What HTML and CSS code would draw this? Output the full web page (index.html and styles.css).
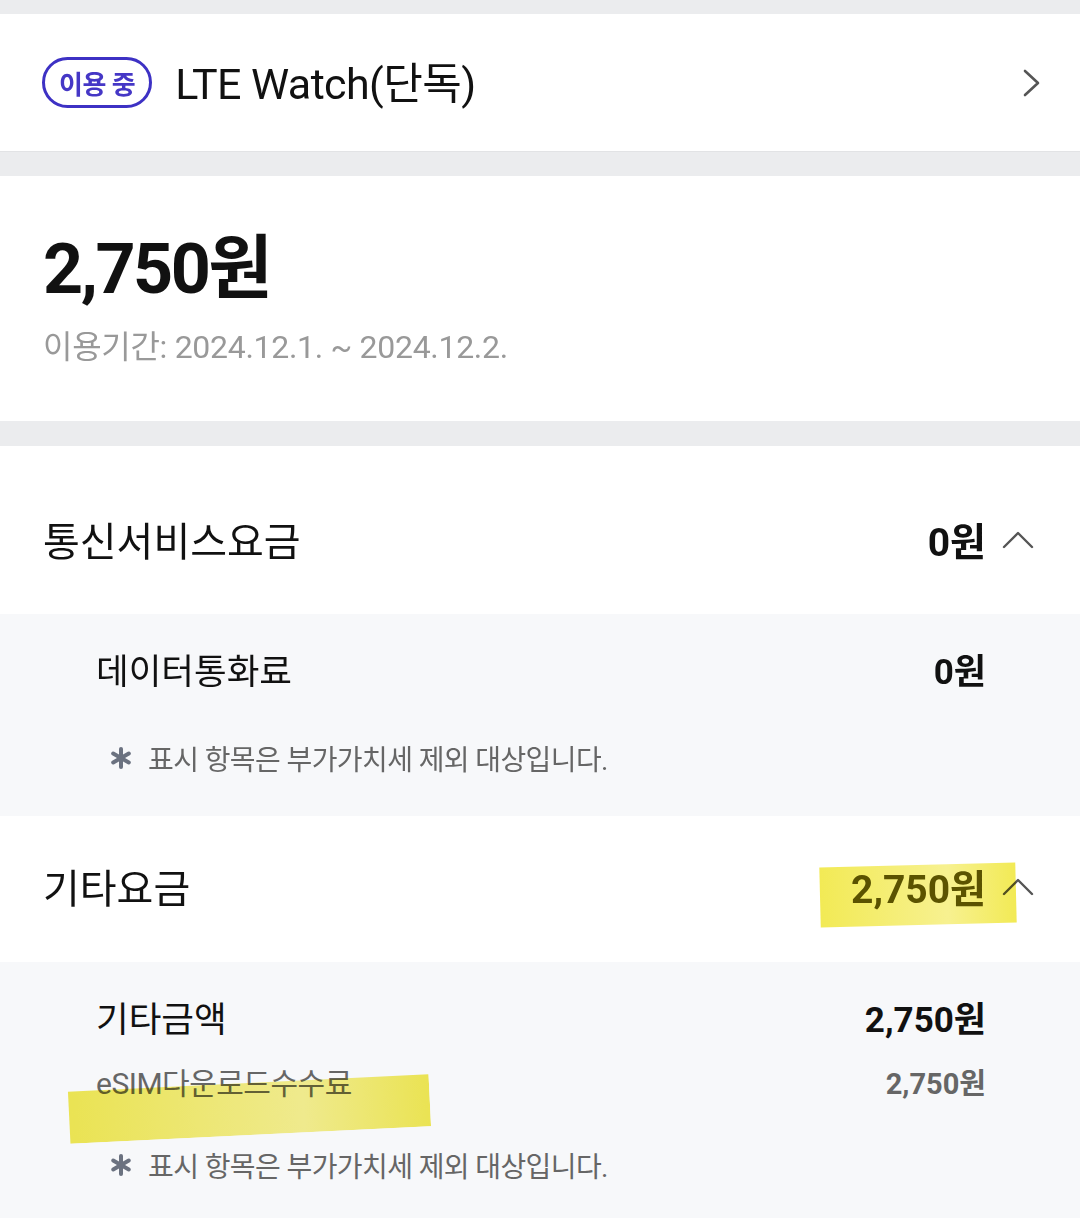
FILE: index.html
```html
<!DOCTYPE html>
<html lang="ko">
<head>
    <meta charset="UTF-8">
    <meta name="viewport" content="width=device-width, initial-scale=1.0">
    <title>요금 상세</title>
    <link rel="stylesheet" href="styles.css">
</head>
<body>
    <div class="page">
        <div class="gap gap-top"></div>

        <section class="plan">
            <span class="badge">이용 중</span>
            <span class="plan-name">LTE Watch(단독)</span>
            <svg class="chevron-right" width="20" height="30" viewBox="0 0 20 30">
                <polyline points="3,3 16,15 3,27" fill="none" stroke="#555" stroke-width="2.6" stroke-linecap="round" stroke-linejoin="round"/>
            </svg>
        </section>

        <div class="gap"></div>

        <section class="summary">
            <div class="total">2,750원</div>
            <div class="period">이용기간: 2024.12.1. ~ 2024.12.2.</div>
        </section>

        <div class="gap gap-wide"></div>

        <section class="fee-head first">
            <span class="fee-title">통신서비스요금</span>
            <span class="fee-amount">0원</span>
            <svg class="chevron-up" width="32" height="22" viewBox="0 0 32 22">
                <polyline points="2,20 16,6 30,20" fill="none" stroke="#555" stroke-width="2.4" stroke-linecap="round" stroke-linejoin="round"/>
            </svg>
        </section>
        <div class="fee-body">
            <div class="item-row">
                <span class="item-label">데이터통화료</span>
                <span class="item-amount">0원</span>
            </div>
            <div class="note">
                <svg class="star" width="22" height="22" viewBox="0 0 22 22">
                    <g stroke="#6b7280" stroke-width="4" stroke-linecap="round">
                        <line x1="11" y1="2" x2="11" y2="20"/>
                        <line x1="3.2" y1="6.5" x2="18.8" y2="15.5"/>
                        <line x1="3.2" y1="15.5" x2="18.8" y2="6.5"/>
                    </g>
                </svg>
                <span>표시 항목은 부가가치세 제외 대상입니다.</span>
            </div>
        </div>

        <section class="fee-head">
            <span class="fee-title">기타요금</span>
            <span class="fee-amount hl">2,750원</span>
            <svg class="chevron-up" width="32" height="22" viewBox="0 0 32 22">
                <polyline points="2,20 16,6 30,20" fill="none" stroke="#555" stroke-width="2.4" stroke-linecap="round" stroke-linejoin="round"/>
            </svg>
            <div class="marker marker-amount"></div>
        </section>
        <div class="fee-body last">
            <div class="item-row">
                <span class="item-label">기타금액</span>
                <span class="item-amount">2,750원</span>
            </div>
            <div class="sub-row">
                <span class="sub-label">eSIM다운로드수수료</span>
                <span class="sub-amount">2,750원</span>
            </div>
            <div class="note">
                <svg class="star" width="22" height="22" viewBox="0 0 22 22">
                    <g stroke="#6b7280" stroke-width="4" stroke-linecap="round">
                        <line x1="11" y1="2" x2="11" y2="20"/>
                        <line x1="3.2" y1="6.5" x2="18.8" y2="15.5"/>
                        <line x1="3.2" y1="15.5" x2="18.8" y2="6.5"/>
                    </g>
                </svg>
                <span>표시 항목은 부가가치세 제외 대상입니다.</span>
            </div>
            <div class="marker marker-esim"></div>
        </div>
    </div>
</body>
</html>
```

FILE: styles.css
```css
body, html {
    margin: 0;
    padding: 0;
    font-family: Roboto, "Noto Sans CJK KR", sans-serif;
    background-color: #f7f8fa;
    color: #111;
}

.page {
    width: 1080px;
    min-height: 1218px;
    overflow: hidden;
}

.gap {
    height: 24px;
    background-color: #ebecee;
}

.gap-top {
    height: 14px;
}

.gap-wide {
    height: 25px;
}

/* plan row */
.plan {
    height: 138px;
    background-color: #fff;
    border-bottom: 1px solid #e2e3e5;
    display: flex;
    align-items: center;
    padding: 0 38px 0 42px;
    box-sizing: border-box;
}

.badge {
    height: 51px;
    box-sizing: border-box;
    border: 3px solid #3d31c4;
    border-radius: 26px;
    padding: 0 14px;
    display: flex;
    align-items: center;
    font-size: 26px;
    font-weight: 700;
    color: #4537c6;
    margin-right: 23px;
    letter-spacing: -0.5px;
}

.plan-name {
    font-size: 43px;
    flex: 1;
    letter-spacing: -0.6px;
    margin-bottom: 6px;
}

/* summary */
.summary {
    height: 245px;
    background-color: #fff;
    padding: 53px 43px 0;
    box-sizing: border-box;
}

.total {
    font-size: 70px;
    font-weight: 700;
    line-height: 80px;
    letter-spacing: -2.5px;
}

.period {
    font-size: 32px;
    color: #999;
    margin-top: 12px;
    letter-spacing: -0.3px;
}

/* fee sections */
.fee-head {
    position: relative;
    height: 146px;
    background-color: #fff;
    display: flex;
    align-items: center;
    padding: 0 46px 6px 43px;
    box-sizing: border-box;
}

.fee-head.first {
    height: 168px;
    padding-top: 18px;
    padding-bottom: 0;
}

.fee-title {
    flex: 1;
    font-size: 40px;
}

.fee-amount {
    font-size: 39px;
    font-weight: 700;
    margin-right: 16px;
}

.fee-amount.hl {
    color: #5e5800;
}

.chevron-up {
    margin-top: -2px;
}

.fee-body {
    position: relative;
    background-color: #f7f8fa;
    padding: 18px 94px 33px 96px;
}

.fee-body.last {
    padding-bottom: 60px;
}

.item-row {
    height: 72px;
    display: flex;
    align-items: center;
    justify-content: space-between;
}

.item-label {
    font-size: 35.5px;
}

.item-amount {
    font-size: 35px;
    font-weight: 700;
}

.sub-row {
    height: 58px;
    display: flex;
    align-items: center;
    justify-content: space-between;
}

.sub-label {
    font-size: 30px;
    color: #666;
    letter-spacing: -0.5px;
}

.sub-amount {
    font-size: 29px;
    font-weight: 700;
    color: #666;
}

.note {
    height: 50px;
    margin-top: 29px;
    margin-left: 14px;
    display: flex;
    align-items: center;
    font-size: 28px;
    color: #666;
    letter-spacing: -0.6px;
}

.sub-row + .note {
    margin-top: 30px;
}

.star {
    margin-right: 16px;
}

/* highlighter strokes drawn over the screenshot */
.marker {
    position: absolute;
    background: linear-gradient(90deg, #f2ea55, #f7f190 65%, #f2ea55);
    mix-blend-mode: multiply;
    pointer-events: none;
}

.marker-amount {
    left: 820px;
    top: 49px;
    width: 196px;
    height: 60px;
    transform: rotate(-1.4deg);
}

.marker-esim {
    left: 69px;
    top: 121px;
    width: 361px;
    height: 52px;
    transform: rotate(-2.8deg);
}
```
